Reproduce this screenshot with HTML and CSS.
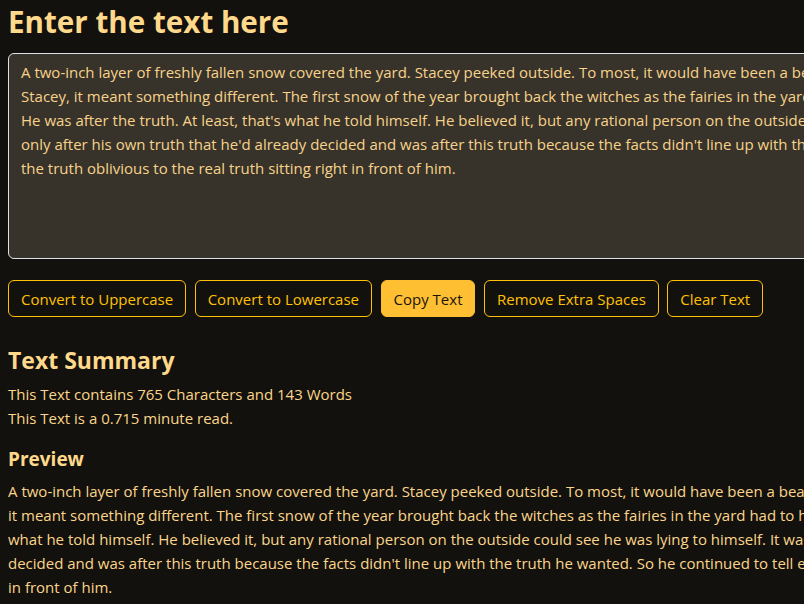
FILE: index.html
```html
<!DOCTYPE html>
<html lang="en">
<head>
<meta charset="utf-8">
<title>TextUtils</title>
<link rel="stylesheet" href="styles.css">
</head>
<body>
<main class="page">
  <section class="editor">
    <h1 class="title">Enter the text here</h1>
    <textarea class="text-input" rows="8" wrap="off">A two-inch layer of freshly fallen snow covered the yard. Stacey peeked outside. To most, it would have been a beautiful sight, but to
Stacey, it meant something different. The first snow of the year brought back the witches as the fairies in the yard had to hide away.
He was after the truth. At least, that's what he told himself. He believed it, but any rational person on the outside could see he was
only after his own truth that he'd already decided and was after this truth because the facts didn't line up with the truth he wanted.
the truth oblivious to the real truth sitting right in front of him.</textarea>
    <div class="actions">
      <button class="btn">Convert to Uppercase</button>
      <button class="btn">Convert to Lowercase</button>
      <button class="btn btn-filled">Copy Text</button>
      <button class="btn">Remove Extra Spaces</button>
      <button class="btn">Clear Text</button>
    </div>
  </section>
  <section class="summary">
    <h2 class="summary-title">Text Summary</h2>
    <p class="stat">This Text contains 765 Characters and 143 Words</p>
    <p class="stat">This Text is a 0.715 minute read.</p>
    <h3 class="preview-title">Preview</h3>
    <p class="preview">A two-inch layer of freshly fallen snow covered the yard. Stacey peeked outside. To most, it would have been a beautiful sight, but to Stacey,<br>it meant something different. The first snow of the year brought back the witches as the fairies in the yard had to hide away. He was after the truth. At least, that's<br>what he told himself. He believed it, but any rational person on the outside could see he was lying to himself. It was apparent he was really only after his own truth that he'd already<br>decided and was after this truth because the facts didn't line up with the truth he wanted. So he continued to tell everyone he was after the truth oblivious to the real truth sitting right<br>in front of him.</p>
  </section>
</main>
</body>
</html>
```

FILE: styles.css
```css
html, body {
  margin: 0;
  padding: 0;
  overflow: hidden;
  background: #13110d;
}

body {
  font-family: "Open Sans", "Liberation Sans", sans-serif;
  font-size: 15px;
  line-height: 24px;
  color: #fbd58b;
}

.page {
  width: 1300px;
  padding: 0 8px;
}

.title {
  margin: 0 0 11px;
  padding-top: 2px;
  font-size: 29.6px;
  line-height: 40px;
  font-weight: 700;
  color: #ffd98b;
}

.text-input {
  display: block;
  box-sizing: border-box;
  width: 1200px;
  height: 206px;
  margin: 0;
  padding: 6px 12px;
  border: 1px solid #dee2e6;
  border-radius: 6px;
  background: #37332a;
  color: #f8d28a;
  font: inherit;
  line-height: 24px;
  white-space: pre;
  overflow: hidden;
  resize: none;
}

.actions {
  display: flex;
  gap: 8.5px;
  margin: 21px 0 0;
}

.btn {
  box-sizing: border-box;
  height: 37px;
  padding: 0 12px;
  border: 1px solid #ffc107;
  border-radius: 6px;
  background: transparent;
  color: #ffc107;
  font: inherit;
  line-height: 24px;
}

.btn-filled {
  background: #ffbf33;
  border-color: #ffbf33;
  color: #1a140a;
}

.summary {
  padding-top: 28px;
}

.summary-title {
  margin: 0 0 7px;
  font-size: 23px;
  line-height: 30px;
  font-weight: 700;
  color: #ffd98b;
}

.stat {
  margin: 0;
}

.preview-title {
  margin: 17px 0 8px;
  font-size: 19px;
  line-height: 24px;
  font-weight: 700;
  color: #ffd98b;
}

.preview {
  margin: 0;
  white-space: nowrap;
}
```
